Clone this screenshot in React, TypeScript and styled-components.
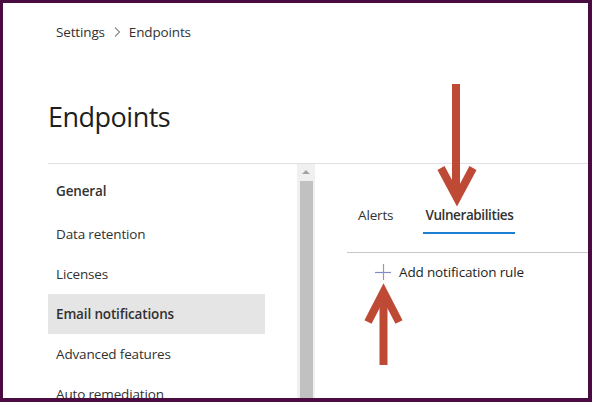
import React from "react";
import styled, { createGlobalStyle } from "styled-components";

const Global = createGlobalStyle`
  html, body { margin: 0; padding: 0; background: #ffffff; }
  body { font-family: "Segoe UI", "Open Sans", "Noto Sans", sans-serif; }
  * { box-sizing: border-box; }
`;

const Frame = styled.div`
  position: relative;
  width: 592px;
  height: 402px;
  border-style: solid;
  border-color: #4a0b40;
  border-width: 3px 4px 4px 3px;
  background: #ffffff;
  overflow: hidden;
  display: flex;
  flex-direction: column;
  color: #323130;
  font-size: 13.5px;
  letter-spacing: -0.15px;
`;

const Breadcrumb = styled.nav`
  height: 58px;
  padding-left: 53px;
  display: flex;
  align-items: center;
  gap: 8px;
  color: #323130;
  flex-shrink: 0;
`;

const Crumb = styled.span`
  line-height: 20px;
`;

const Title = styled.h1`
  margin: 38px 0 28px 45px;
  font-size: 27px;
  letter-spacing: -0.5px;
  line-height: 36px;
  font-weight: 400;
  color: #201f1e;
  flex-shrink: 0;
`;

const Body = styled.div`
  margin-left: 45px;
  border-top: 1px solid #e1e1e1;
  display: flex;
  flex: 1;
  min-height: 0;
`;

const Nav = styled.ul`
  list-style: none;
  margin: 0;
  padding: 10px 0 0 0;
  width: 249px;
  flex-shrink: 0;
`;

const NavItem = styled.li<{ $active?: boolean; $heading?: boolean }>`
  width: 217px;
  height: 40px;
  padding-left: 8px;
  padding-bottom: ${(p) => (p.$heading ? "6px" : "0")};
  display: flex;
  align-items: center;
  color: #323130;
  font-weight: ${(p) => (p.$active || p.$heading ? 600 : 400)};
  background: ${(p) => (p.$active ? "#e5e5e5" : "transparent")};
`;

const ScrollTrack = styled.div`
  width: 18px;
  flex-shrink: 0;
  background: #f0f0f0;
  display: flex;
  flex-direction: column;
  align-items: center;
`;

const ScrollArrow = styled.div`
  margin-top: 6px;
  width: 0;
  height: 0;
  border-left: 4px solid transparent;
  border-right: 4px solid transparent;
  border-bottom: 4px solid #a3a3a3;
`;

const ScrollThumb = styled.div`
  margin-top: 7px;
  width: 13px;
  flex: 1;
  background: #c1c1c1;
`;

const Panel = styled.section`
  flex: 1;
  padding-left: 32px;
  display: flex;
  flex-direction: column;
`;

const TabList = styled.div`
  margin: 41px 0 0 9px;
  display: flex;
  gap: 28px;
`;

const Tab = styled.div<{ $selected?: boolean }>`
  padding: 0 2px 7px;
  line-height: 20px;
  color: #323130;
  font-weight: ${(p) => (p.$selected ? 600 : 400)};
  letter-spacing: ${(p) => (p.$selected ? "-0.4px" : "-0.15px")};
  border-bottom: 2px solid ${(p) => (p.$selected ? "#1a7fd1" : "transparent")};
`;

const Divider = styled.div`
  margin-top: 18px;
  height: 1px;
  background: #c8c8c8;
`;

const AddButton = styled.div`
  margin: 9px 0 0 28px;
  display: flex;
  align-items: center;
  gap: 8px;
  line-height: 20px;
  color: #201f1e;
`;

const Overlay = styled.svg`
  position: absolute;
  left: -3px;
  top: -3px;
  pointer-events: none;
`;

const Chevron = () => (
  <svg width="8" height="12" viewBox="0 0 8 12">
    <path d="M2 1.5 L6.5 6 L2 10.5" fill="none" stroke="#8a8886" strokeWidth="1.1" />
  </svg>
);

const PlusIcon = () => (
  <svg width="16" height="16" viewBox="0 0 16 16">
    <path d="M0 8.5 H16" stroke="#7f8cc9" strokeWidth="1.2" />
    <path d="M8.5 0 V17" stroke="#b887b0" strokeWidth="1.2" />
  </svg>
);

export default function App() {
  return (
    <>
      <Global />
      <Frame>
        <Breadcrumb>
          <Crumb>Settings</Crumb>
          <Chevron />
          <Crumb>Endpoints</Crumb>
        </Breadcrumb>
        <Title>Endpoints</Title>
        <Body>
          <Nav>
            <NavItem $heading>General</NavItem>
            <NavItem>Data retention</NavItem>
            <NavItem>Licenses</NavItem>
            <NavItem $active>Email notifications</NavItem>
            <NavItem>Advanced features</NavItem>
            <NavItem>Auto remediation</NavItem>
          </Nav>
          <ScrollTrack>
            <ScrollArrow />
            <ScrollThumb />
          </ScrollTrack>
          <Panel>
            <TabList>
              <Tab>Alerts</Tab>
              <Tab $selected>Vulnerabilities</Tab>
            </TabList>
            <Divider />
            <AddButton>
              <PlusIcon />
              <span>Add notification rule</span>
            </AddButton>
          </Panel>
        </Body>
        <Overlay width="592" height="402" viewBox="0 0 592 402">
          <g stroke="#be4a35" strokeWidth="8" fill="none" strokeLinecap="butt" strokeLinejoin="miter">
            <path d="M456 84 V196" />
            <path d="M441 168 L457 198 L473 168" />
            <path d="M383.5 365 V294" />
            <path d="M368 322 L383.5 292 L399 322" />
          </g>
        </Overlay>
      </Frame>
    </>
  );
}
